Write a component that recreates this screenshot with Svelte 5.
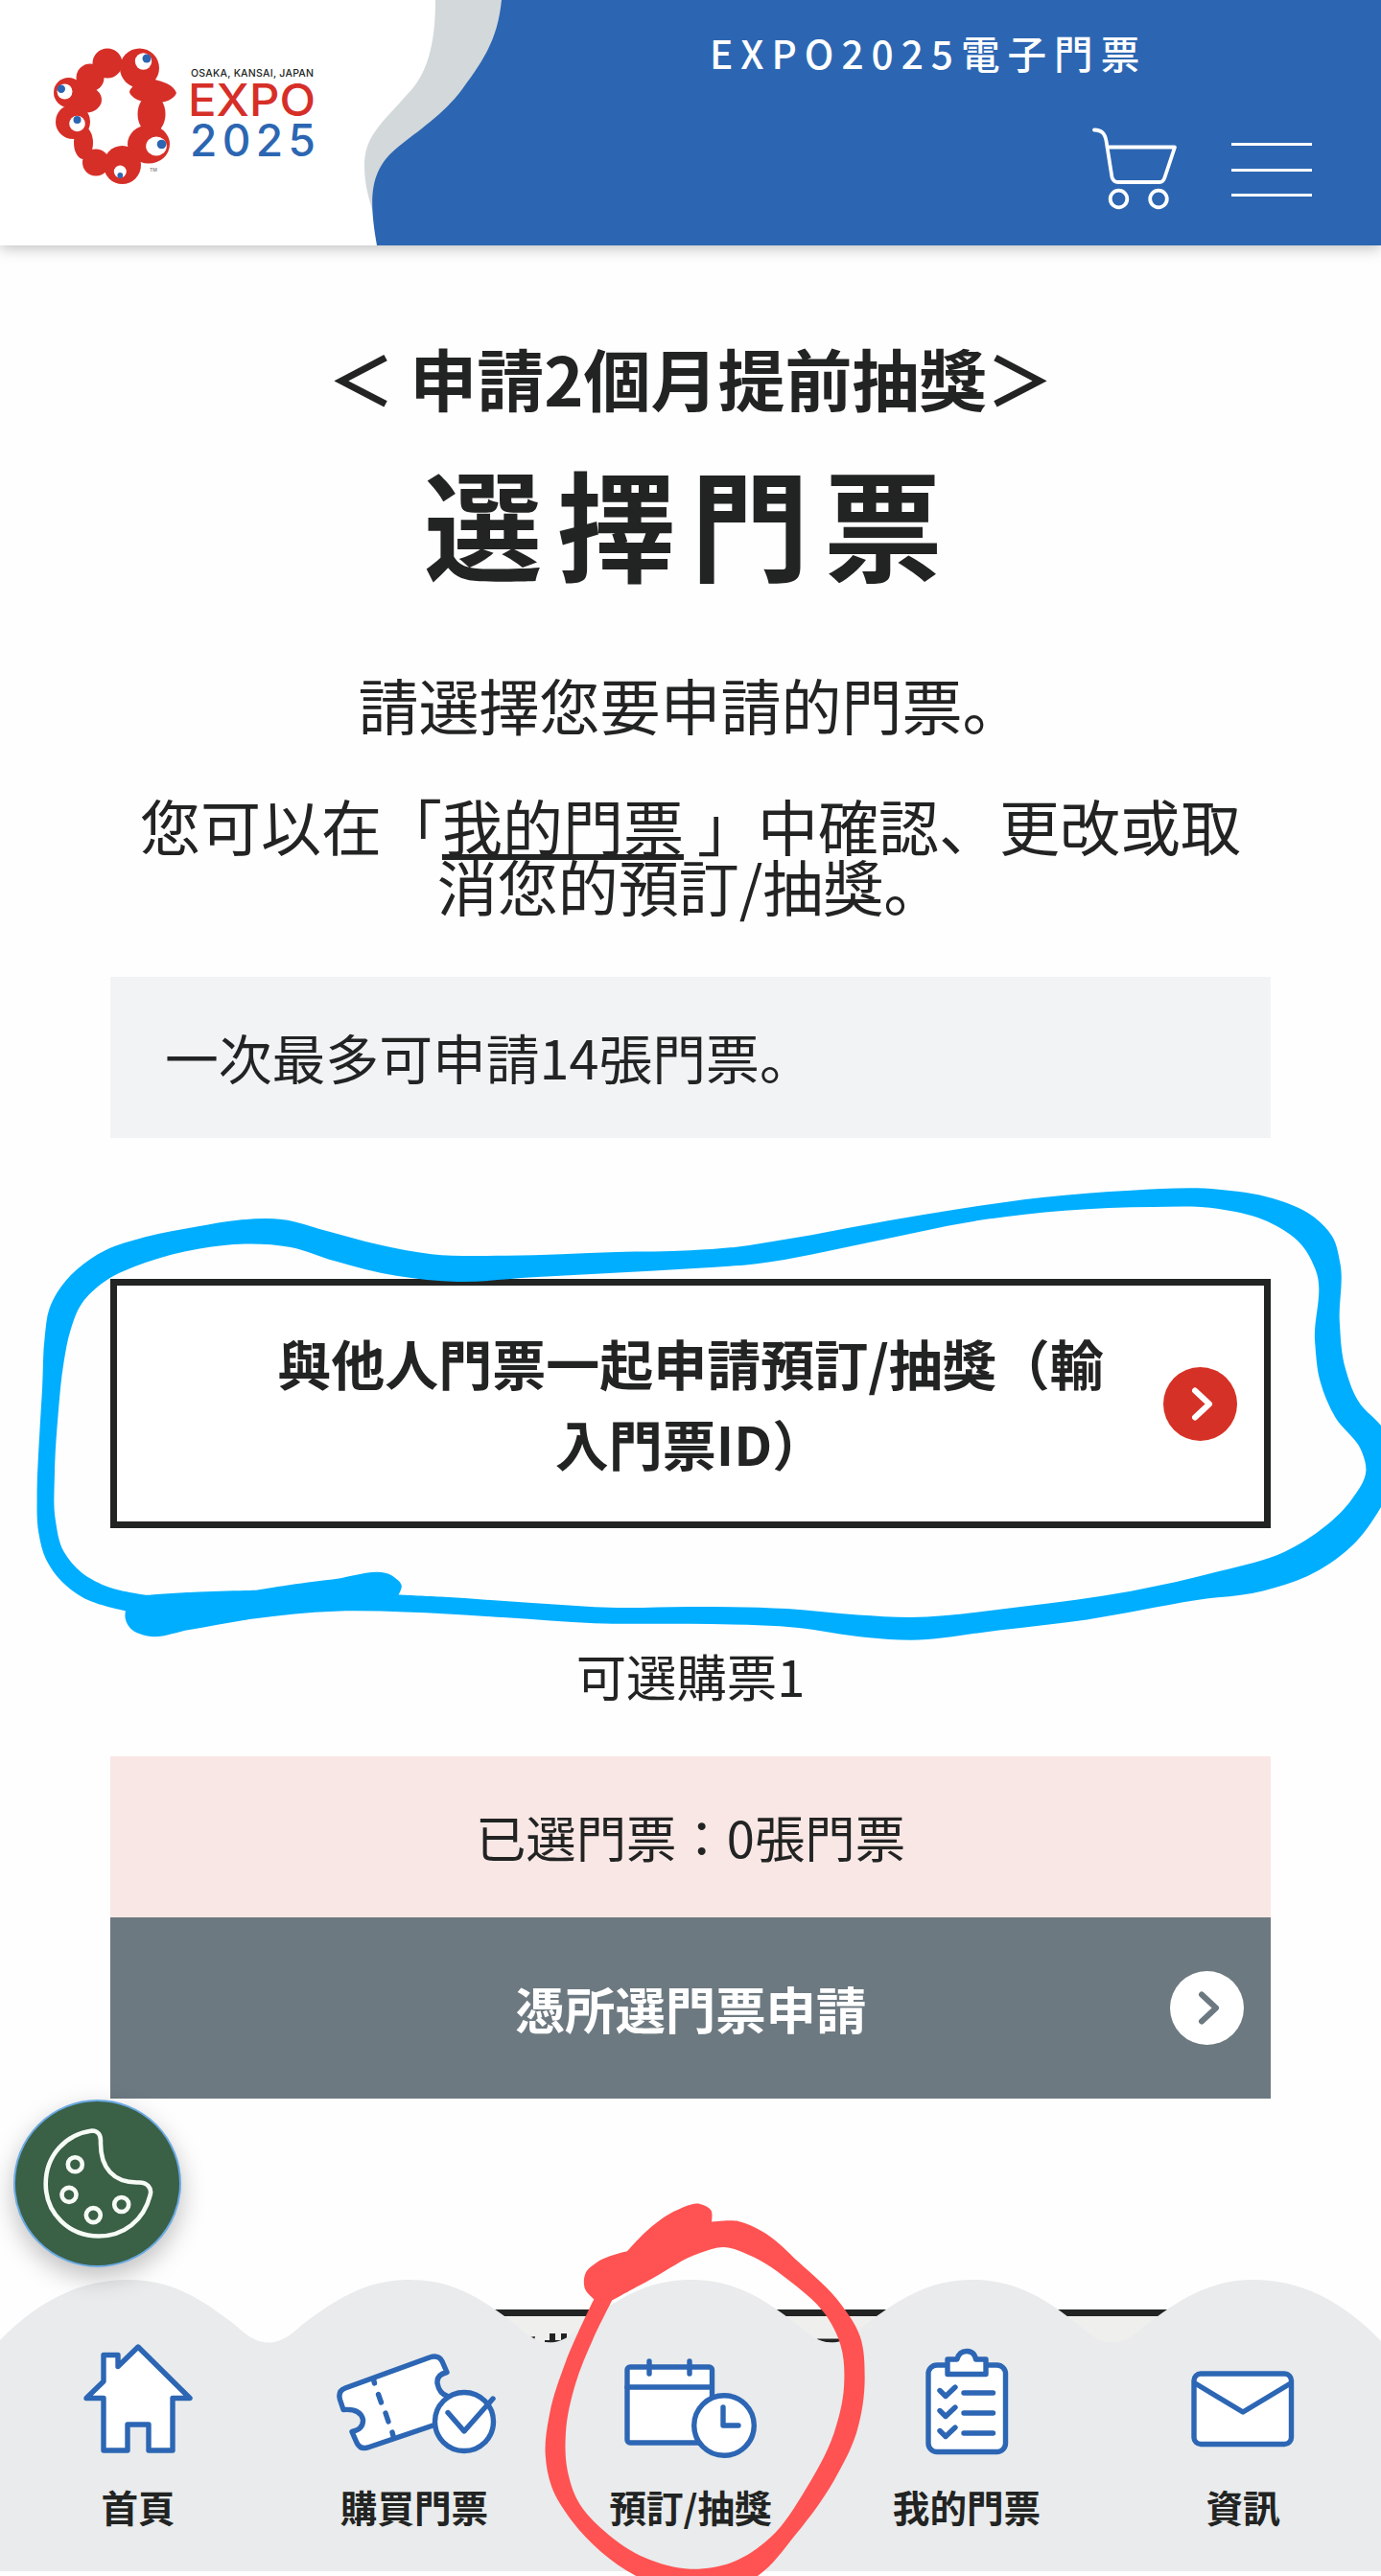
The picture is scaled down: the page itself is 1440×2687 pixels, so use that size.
<script>
  const tabs = [
    { id: "home", label: "首頁" },
    { id: "buy", label: "購買門票" },
    { id: "reserve", label: "預訂/抽獎" },
    { id: "mine", label: "我的門票" },
    { id: "news", label: "資訊" }
  ];

  const troughs = [280, 573, 867, 1160];

  // scalloped top edge of the tab bar
  const wave =
    "M0 63 C42 20 86 0 133 0 " +
    troughs
      .map(
        (x) =>
          `C${x - 98} 0 ${x - 68} 22 ${x - 35} 47 C${x - 22} 59 ${x - 12} 65.5 ${x} 65.5 ` +
          `C${x + 12} 65.5 ${x + 22} 59 ${x + 35} 47 C${x + 68} 22 ${x + 100} 0 ${x + 147} 0`
      )
      .join(" ") +
    " C1354 0 1398 20 1440 64 V304 H0 Z";

  const dist = (a, b) => Math.hypot(b[0] - a[0], b[1] - a[1]);

  // tangent at b, weighted so that short segments do not kink
  // a third entry in the point marks a sharp corner
  function tangent(a, b, c) {
    if (b[2]) return [0, 0];
    const d1 = dist(a, b);
    const d2 = dist(b, c);
    return [0, 1].map(
      (k) => (((b[k] - a[k]) / d1) * d2 + ((c[k] - b[k]) / d2) * d1) / (d1 + d2)
    );
  }

  // closed smooth curve through a list of points
  function smooth(pts) {
    const n = pts.length;
    let d = `M${pts[0][0]} ${pts[0][1]}`;
    for (let i = 0; i < n; i++) {
      const [p0, p1, p2, p3] = [-1, 0, 1, 2].map((k) => pts[(i + k + n) % n]);
      const len = dist(p1, p2) / 3;
      const t1 = tangent(p0, p1, p2);
      const t2 = tangent(p1, p2, p3);
      const c = [
        p1[0] + t1[0] * len,
        p1[1] + t1[1] * len,
        p2[0] - t2[0] * len,
        p2[1] - t2[1] * len
      ].map((v) => v.toFixed(1));
      d += `C${c.join(" ")} ${p2[0]} ${p2[1]}`;
    }
    return d + "Z";
  }

  const blueOuter = [
    [285, 1395, 1], [200, 1362], [140, 1305], [105, 1240], [88, 1160], [84, 1040], [88, 900], [96, 720], [102, 560],
    [112, 480], [130, 430], [175, 360], [240, 302], [330, 262], [450, 230], [540, 211], [640, 209], [740, 243],
    [860, 285], [980, 314], [1150, 319], [1400, 308], [1568, 303], [1668, 293], [1800, 266], [1970, 224], [2168, 179],
    [2368, 142], [2568, 121], [2768, 118], [2890, 145], [2980, 198], [3025, 260], [3043, 340], [3042, 520],
    [3055, 660], [3090, 770], [3136, 833], [3180, 950], [3136, 1080], [3068, 1200], [2968, 1290], [2868, 1334],
    [2718, 1362], [2468, 1421], [2268, 1453], [2068, 1483], [1968, 1475], [1808, 1445], [1568, 1434], [1350, 1432],
    [1150, 1415], [920, 1398], [760, 1396], [580, 1418], [430, 1452], [335, 1471], [300, 1452], [284, 1412]
  ];
  const blueInner = [
    [333, 1347, 1], [250, 1324], [185, 1278], [145, 1215], [126, 1120], [124, 980], [132, 800], [145, 640], [160, 545],
    [185, 465], [240, 395], [330, 340], [450, 298], [570, 283], [660, 293], [760, 335], [900, 380], [1040, 398],
    [1200, 385], [1568, 358], [1718, 343], [1968, 280], [2218, 213], [2418, 182], [2618, 171], [2768, 177],
    [2878, 215], [2955, 285], [2987, 360], [2986, 580], [2998, 700], [3033, 810], [3090, 905], [3102, 970],
    [3068, 1060], [3008, 1140], [2918, 1215], [2768, 1275], [2568, 1335], [2318, 1382], [2068, 1414], [1948, 1407],
    [1788, 1388], [1568, 1382], [1400, 1385], [1200, 1370], [1000, 1352], [905, 1346, 1], [912, 1318], [890, 1288],
    [750, 1300], [580, 1332, 1], [440, 1338]
  ];
  const redOuter = [
    [418, 415, 1], [330, 610], [280, 770], [266, 900], [285, 1000], [350, 1110], [440, 1205], [550, 1281], [740, 1345],
    [930, 1281], [1050, 1150], [1170, 980], [1240, 830], [1265, 660], [1250, 530], [1190, 430], [1060, 300],
    [940, 200], [870, 171], [786, 173, 1], [785, 138], [750, 117], [680, 135], [590, 195], [522, 265, 1], [430, 298],
    [391, 335], [391, 385]
  ];
  const redInner = [
    [475, 418, 1], [415, 540], [360, 680], [330, 830], [335, 950], [370, 1050], [450, 1140], [580, 1225], [720, 1259],
    [850, 1238], [970, 1160], [1080, 1010], [1170, 830], [1200, 690], [1190, 560], [1140, 460], [1040, 365],
    [900, 275], [825, 252], [750, 270], [600, 350]
  ];
</script>

<div class="page">
  <header class="header">
    <svg class="brand" viewBox="0 0 530 256" aria-label="EXPO 2025">
      <path fill="#d3d8db" d="M454 0 C454 48 445 78 425 98 C397 130 380 142 380 173 C380 192 384 205 390 225 L530 225 V0 Z" />
      <path fill="#2c66b2" d="M523 0 C519 40 505 62 482 93 C462 120 436 136 413 155 C386 178 384 205 393 256 H531 V0 Z" />
      <g fill="#d62f28">
        <circle cx="112" cy="66" r="15.5" />
        <ellipse cx="145.500" cy="71" rx="20.500" ry="20.500" />
        <circle cx="94" cy="81" r="14.500" />
        <circle cx="71.500" cy="96.500" r="15.500" />
        <ellipse cx="90" cy="104" rx="16" ry="13.500" />
        <circle cx="76" cy="127" r="18" />
        <ellipse cx="87" cy="149" rx="10" ry="17" />
        <circle cx="100" cy="169.500" r="14" />
        <ellipse cx="127.500" cy="172" rx="19.500" ry="20" />
        <ellipse cx="155" cy="150.500" rx="22" ry="20" />
        <ellipse cx="158" cy="119" rx="14.500" ry="20" />
        <path d="M140 82 H158 C164 84 180 86 184 97 C180 106 168 108 156 107 C146 107 136 101 135 96 C136 91 140 92 140 82 Z" />
      </g>
      <g fill="#fff">
        <circle cx="149.500" cy="64" r="8.700" />
        <circle cx="67.500" cy="95.500" r="8" />
        <circle cx="80.500" cy="129" r="8.300" />
        <ellipse cx="163" cy="152.500" rx="10.800" ry="10" />
        <circle cx="125.300" cy="179" r="6.500" />
      </g>
      <g fill="#2c66b2">
        <circle cx="153" cy="61" r="4.500" />
        <circle cx="63.800" cy="92.800" r="4.200" />
        <circle cx="80.500" cy="125" r="4" />
        <circle cx="168.500" cy="150.500" r="4.800" />
        <circle cx="125.300" cy="183" r="2.900" />
      </g>
      <text class="place" x="199" y="80" textLength="128">OSAKA, KANSAI, JAPAN</text>
      <text class="expo" x="196" y="121" textLength="133" lengthAdjust="spacingAndGlyphs">EXPO</text>
      <text class="year" x="198" y="162.500" textLength="131">2025</text>
      <text class="tm" x="156" y="179">TM</text>
    </svg>
    <div class="bar">
      <div class="site">EXPO2025電子門票</div>
      <div class="tools">
        <svg width="94" height="90" viewBox="0 0 94 90" class="line-white">
          <path d="M4 4.500 C12 5 15 8 16.500 16 L22.500 54 Q24 59 29 59 H72 Q76 59 77.500 54 L88 22.500 H18" />
          <circle cx="29.500" cy="76.500" r="8.800" />
          <circle cx="71" cy="76.500" r="8.800" />
        </svg>
        <div class="menu"><i></i><i></i><i></i></div>
      </div>
    </div>
  </header>

  <main>
    <p class="step">＜ 申請2個月提前抽獎＞</p>
    <h1>選擇門票</h1>
    <p class="lead">請選擇您要申請的門票。</p>
    <p class="lead second">
      您可以在「<span class="link">我的門票</span> 」中確認、更改或取<br />消您的預訂/抽獎。
    </p>
    <div class="note">一次最多可申請14張門票。</div>

    <div class="together">
      <span>與他人門票一起申請預訂/抽獎（輸<br />入門票ID）</span>
      <svg class="go" viewBox="0 0 77 77">
        <circle cx="38.500" cy="38.500" r="38.500" fill="#d63127" />
        <path d="M33 24.500 L48 38.500 L33 52.500" stroke="#fff" />
      </svg>
    </div>

    <p class="count">可選購票1</p>
    <div class="picked">已選門票：0張門票</div>
    <div class="apply">
      <span>憑所選門票申請</span>
      <svg class="go" viewBox="0 0 77 77">
        <circle cx="38.500" cy="38.500" r="38.500" fill="#fff" />
        <path d="M33 24.500 L48 38.500 L33 52.500" stroke="#6d7980" />
      </svg>
    </div>

    <div class="card">
      <svg viewBox="0 0 892 60" width="892" height="60" fill="#222423">
        <path d="M214 22 L220 21 L219 25 Z M230 25 H235 V18 H241 V25 H247 V18 H253 V25 Q242 29 230 27 Z M514 23.500 H540 V27 Q525 29 514 25 Z" />
      </svg>
    </div>
  </main>

  <button class="cookie" aria-label="Cookie">
    <svg viewBox="0 0 175 175">
      <path d="M82 32.500 C88 32.500 91 37 91 43 C90 72 105 87 130 86.500 C139 86 145 92 142.500 100 C136 126 115 142.500 89 142.500 C58 142.500 33.700 119 33.700 88 C33.700 58 55 36 82 32.500 Z" />
      <circle cx="64.300" cy="67.800" r="7.500" />
      <circle cx="58" cy="99.400" r="7.500" />
      <circle cx="83.300" cy="120.600" r="7.500" />
      <circle cx="112.700" cy="109.500" r="7.500" />
    </svg>
  </button>

  <nav class="tabs">
    <svg class="wave" viewBox="0 0 1440 304"><path d={wave} /></svg>
    {#each tabs as tab (tab.id)}
      <div class="tab">
        <svg class="icon" viewBox="0 0 180 130">
          {#if tab.id === "home"}
            <path d="M90 13 L144 66.500 H126 V121 H101 V94 H79 V121 H54 V66.500 H36 L54 49 V21.500 H69 V33.500 Z" />
          {:else if tab.id === "buy"}
            <path d="M16 78.500 L12.500 68 Q10 59 18 56 L106 24 Q115 21 119 28 L124 39.500 Q113 42 114 51 Q116 62 125 64.500 L130 88 L43 117.500 Q34 121 30 113 L25 101.500 Q37 99 36.500 89 Q34 77 16 78.500 Z" />
            <path fill="none" d="M47.500 47 L48.500 51 M52.500 62.500 L55.500 71 M60 82 L63 91 M67 102 L68 106" />
            <circle cx="142" cy="91" r="30.500" />
            <path fill="none" d="M125 81.500 L142 101 L172 67" />
          {:else if tab.id === "reserve"}
            <rect x="24" y="34" width="88.500" height="79" rx="3" />
            <path fill="none" d="M24 55 H112 M47 28 V41 M89 28 V41" />
            <circle cx="125" cy="95" r="31.300" />
            <path fill="none" d="M124 76 V95 H140" />
          {:else if tab.id === "mine"}
            <rect x="50" y="32" width="80.500" height="90.500" rx="9" />
            <path d="M70 26 H80 Q82 17.500 90 17.500 Q98 17.500 99.500 26 H110 V41.500 H70 Z" />
            {#each [0, 21, 42] as dy}
              <path fill="none" d="M62 {58.5 + dy} L68 {64.500 + dy} L78 {55 + dy} M87 {61 + dy} H117.500" />
            {/each}
          {:else}
            <rect x="39" y="41" width="101.500" height="73.500" rx="7" />
            <path fill="none" d="M41 51.500 L90 81 L139 51.500" />
          {/if}
        </svg>
        <span>{tab.label}</span>
      </div>
    {/each}
  </nav>

  <svg class="mark blue" viewBox="0 0 3136 1568" preserveAspectRatio="none">
    <path d="{smooth(blueOuter)}{smooth(blueInner)}" />
  </svg>
  <svg class="mark red" viewBox="0 0 1440 1281" preserveAspectRatio="none">
    <path d="{smooth(redOuter)}{smooth(redInner)}" />
  </svg>
</div>

<style>
  :global(body) {
    background: #fefefe;
  }

  .page {
    position: relative;
    width: 1440px;
    height: 2687px;
    overflow: hidden;
    color: #222423;
    background: #fefefe;
    font-family: "Noto Sans CJK JP", "Noto Sans CJK TC", sans-serif;
  }

  p,
  h1 {
    margin: 0;
  }

  .header {
    display: flex;
    height: 256px;
    background: #fff;
    box-shadow: 0 3px 14px rgba(0, 0, 0, 0.25);
  }

  .brand {
    flex: none;
    width: 530px;
    height: 256px;
  }

  .place,
  .expo,
  .year,
  .tm {
    font-family: Inter, "Liberation Sans", sans-serif;
    font-size: 46px;
    font-weight: 500;
  }

  .place {
    font-size: 10.5px;
    fill: #222423;
  }

  .expo {
    fill: #d62f28;
  }

  .year {
    fill: #2c66b2;
  }

  .tm {
    font-size: 5px;
    fill: #777;
  }

  .bar {
    flex: 1;
    display: flex;
    flex-direction: column;
    background: #2c66b2;
    color: #fff;
  }

  .site {
    margin: 25px 0 0 210px;
    font-size: 40.6px;
    font-weight: 500;
    line-height: 60px;
    letter-spacing: 8px;
    white-space: nowrap;
  }

  .tools {
    display: flex;
    justify-content: flex-end;
    align-items: flex-start;
    gap: 53px;
    margin: 46px 72px 0 0;
  }

  .line-white {
    fill: none;
    stroke: #fff;
    stroke-width: 3.8;
    stroke-linecap: round;
    stroke-linejoin: round;
  }

  .menu {
    display: flex;
    flex-direction: column;
    gap: 23.5px;
    width: 84px;
    padding-top: 18px;
  }

  .menu i {
    height: 3px;
    background: #fff;
  }

  main {
    display: flex;
    flex-direction: column;
    padding: 96px 115px 0;
    text-align: center;
  }

  .step {
    font-size: 70px;
    font-weight: 700;
    line-height: 84px;
  }

  h1 {
    margin-top: 33px;
    font-size: 123.5px;
    font-weight: 700;
    line-height: 150px;
    letter-spacing: 15.5px;
  }

  .lead {
    margin-top: 83px;
    font-size: 63px;
    line-height: 63px;
    white-space: nowrap;
  }

  .second {
    margin-top: 63px;
  }

  .link {
    text-decoration: underline;
    text-decoration-thickness: 6px;
    text-decoration-skip-ink: none;
    text-underline-offset: 4px;
  }

  .note {
    height: 168px;
    margin-top: 65px;
    padding-left: 57px;
    background: #f1f3f5;
    font-size: 55.8px;
    line-height: 166px;
    text-align: left;
  }

  .together {
    position: relative;
    display: flex;
    align-items: center;
    justify-content: center;
    box-sizing: border-box;
    height: 260px;
    margin-top: 147px;
    border: 7px solid #222423;
    background: #fff;
    font-size: 56px;
    font-weight: 700;
    line-height: 84px;
  }

  .together span {
    margin-top: -2px;
  }

  .go {
    position: absolute;
    right: 28px;
    width: 77px;
    height: 77px;
  }

  .go path {
    fill: none;
    stroke-width: 6;
    stroke-linecap: round;
    stroke-linejoin: round;
  }

  .count {
    margin-top: 113px;
    font-size: 52.4px;
    line-height: 80px;
  }

  .picked {
    height: 168px;
    margin-top: 45px;
    background: #f9e7e5;
    font-size: 52.4px;
    line-height: 167px;
  }

  .apply {
    position: relative;
    display: flex;
    align-items: center;
    justify-content: center;
    height: 189px;
    background: #6d7980;
    color: #fff;
    font-size: 52.4px;
    font-weight: 700;
  }

  .apply span {
    margin-top: -1px;
  }

  .card {
    width: 892px;
    height: 80px;
    margin: 220px 0 0 223px;
    border-top: 7px solid #222423;
    background: #efefee;
  }

  .cookie {
    position: absolute;
    left: 14px;
    top: 2190px;
    width: 175px;
    height: 175px;
    padding: 0;
    border: 2px solid #6aaae4;
    border-radius: 50%;
    background: #3a6046;
    box-shadow: 0 10px 26px rgba(0, 0, 0, 0.25);
    z-index: 2;
  }

  .cookie svg {
    display: block;
    width: 175px;
    height: 175px;
    margin: -2px;
    fill: none;
    stroke: #f7fbf5;
    stroke-width: 4.6;
  }

  .tabs {
    position: absolute;
    left: 0;
    bottom: 5px;
    display: grid;
    grid-template-columns: repeat(5, 1fr);
    width: 1440px;
    height: 304px;
  }

  .wave {
    position: absolute;
    width: 1440px;
    height: 304px;
    fill: #e9ebec;
  }

  .tab {
    position: relative;
    display: flex;
    flex-direction: column;
    align-items: center;
    padding-top: 57px;
    font-size: 38.6px;
    font-weight: 700;
    line-height: 50px;
  }

  .icon {
    width: 180px;
    height: 130px;
    margin-bottom: 24px;
    fill: #fff;
    stroke: #2c66b4;
    stroke-width: 5.4;
    stroke-linecap: round;
    stroke-linejoin: round;
  }

  .mark {
    position: absolute;
    fill-rule: evenodd;
    z-index: 3;
  }

  .blue {
    left: 0;
    top: 1200px;
    width: 1440px;
    height: 540px;
    fill: #00aeff;
  }

  .red {
    left: 480px;
    top: 2260px;
    width: 480px;
    height: 427px;
    fill: #ff5252;
  }
</style>
